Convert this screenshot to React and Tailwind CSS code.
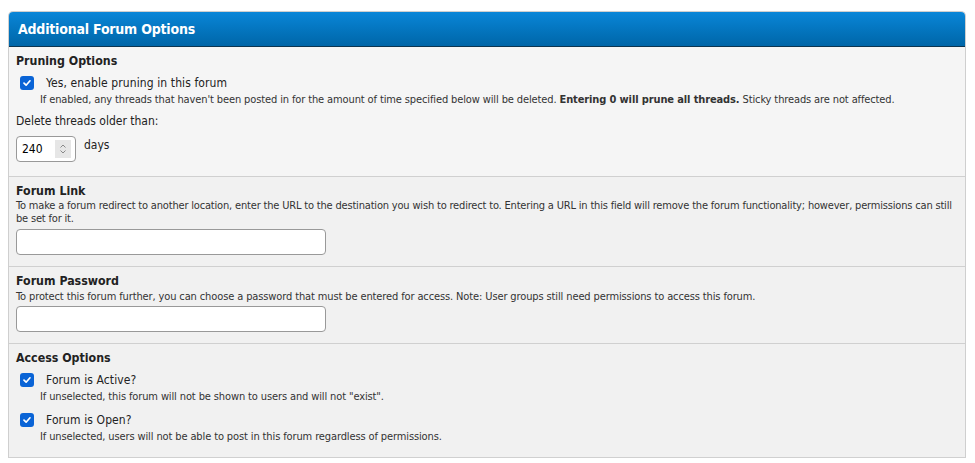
import React, { useState } from 'react';

const font = "font-['DejaVu_Sans_Condensed','DejaVu_Sans',sans-serif] [font-stretch:condensed]";

const Check = ({ label, desc, top }) => {
    const [on, setOn] = useState(true);
    return (
        <div className={top}>
            <label className="flex items-center cursor-pointer h-[16px]">
                <span
                    onClick={() => setOn(!on)}
                    className={`ml-[4px] mr-[12px] flex h-[14px] w-[14px] items-center justify-center rounded-[3px] ${on ? 'bg-[#0a64d6]' : 'border border-gray-500 bg-white'}`}
                >
                    {on && (
                        <svg width="10" height="10" viewBox="0 0 10 10">
                            <path d="M2 5.2 L4.1 7.2 L8 2.8" fill="none" stroke="white" strokeWidth="1.7" strokeLinecap="round" strokeLinejoin="round" />
                        </svg>
                    )}
                </span>
                <span className="text-[12px] leading-[16px] text-[#222] tracking-[0.1px]">{label}</span>
            </label>
            <div className="mt-[2px] ml-[24px] text-[11px] leading-[14px] tracking-[-0.12px] text-[#333]">{desc}</div>
        </div>
    );
};

const Row = ({ title, bg, pb, children }) => (
    <div className={`${bg} ${pb} border-b border-[#d0d0d0] px-[7px] pt-[6px]`}>
        <div className="text-[12.3px] leading-[16px] font-bold text-[#222]">{title}</div>
        {children}
    </div>
);

const TextBox = ({ top }) => (
    <input className={`${top} block h-[26px] w-[310px] rounded-[4px] border border-[#999] bg-white px-2 text-[12px]`} />
);

export default function App() {
    const [days, setDays] = useState(240);

    return (
        <div className={`bg-white pt-[11px] pl-[8px] pr-[9px] ${font}`}>
            <div className="overflow-hidden rounded-t-[5px] border border-[#cfcfcf] border-b-0">
                <div className="h-[35px] bg-gradient-to-b from-[#0a86d8] to-[#0066a8] border-b border-[#0c3550] px-[9px] flex items-center">
                    <span className="text-[14px] font-bold text-white tracking-[-0.2px]">Additional Forum Options</span>
                </div>

                <Row title="Pruning Options" bg="bg-[#f5f5f5]" pb="pb-[14px]">
                    <Check
                        top="mt-[6px]"
                        label="Yes, enable pruning in this forum"
                        desc={<>If enabled, any threads that haven't been posted in for the amount of time specified below will be deleted. <b>Entering 0 will prune all threads.</b> Sticky threads are not affected.</>}
                    />
                    <div className="mt-[6px] text-[12px] leading-[16px] text-[#222]">Delete threads older than:</div>
                    <div className="mt-[7px] flex items-start gap-[8px]">
                        <div className="flex h-[26px] w-[60px] items-center justify-between rounded-[4px] border border-[#999] bg-white pl-[5px] pr-[4px]">
                            <span className="text-[12px] text-black">{days}</span>
                            <div className="flex h-[18px] w-[16px] flex-col items-center justify-center bg-[#e6e6e6]">
                                <svg width="8" height="12" viewBox="0 0 8 12">
                                    <path d="M1.5 4.5 L4 2 L6.5 4.5" fill="none" stroke="#888" strokeWidth="1" />
                                    <path d="M1.5 7.5 L4 10 L6.5 7.5" fill="none" stroke="#888" strokeWidth="1" />
                                </svg>
                            </div>
                        </div>
                        <span className="pt-[1px] text-[12px] leading-[16px] text-[#222]">days</span>
                    </div>
                </Row>

                <Row title="Forum Link" bg="bg-[#f1f1f1]" pb="pb-[11px]">
                    <div className="text-[11px] leading-[13px] tracking-[-0.18px] text-[#333]">
                        To make a forum redirect to another location, enter the URL to the destination you wish to redirect to. Entering a URL in this field will remove the forum functionality; however, permissions can still be set for it.
                    </div>
                    <TextBox top="mt-[4px]" />
                </Row>

                <Row title="Forum Password" bg="bg-[#f1f1f1]" pb="pb-[11px]">
                    <div className="mt-[1px] text-[11px] leading-[13px] tracking-[-0.12px] text-[#333]">
                        To protect this forum further, you can choose a password that must be entered for access. Note: User groups still need permissions to access this forum.
                    </div>
                    <TextBox top="mt-[3px]" />
                </Row>

                <Row title="Access Options" bg="bg-[#f1f1f1]" pb="pb-[13px]">
                    <Check top="mt-[6px]" label="Forum is Active?" desc={<>If unselected, this forum will not be shown to users and will not "exist".</>} />
                    <Check top="mt-[8px]" label="Forum is Open?" desc="If unselected, users will not be able to post in this forum regardless of permissions." />
                </Row>
            </div>
        </div>
    );
}
